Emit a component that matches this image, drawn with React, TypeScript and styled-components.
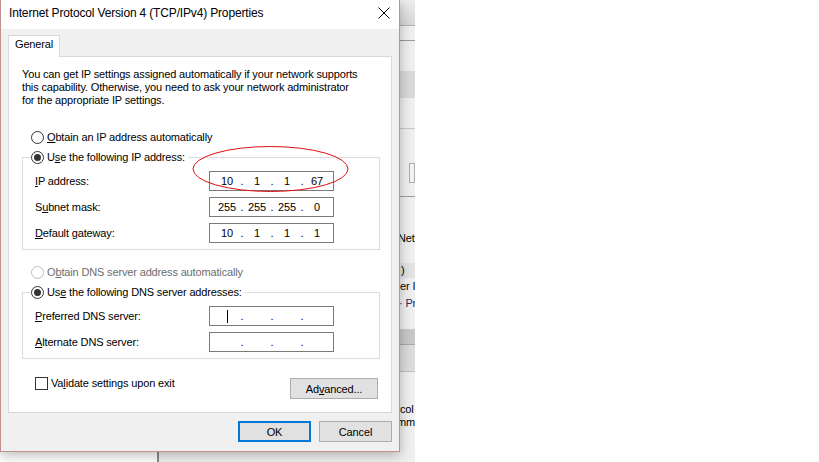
import React from "react";
import styled, { createGlobalStyle } from "styled-components";

// 기본 스타일
const GlobalStyle = createGlobalStyle`
  html, body {
    margin: 0;
    padding: 0;
    background: #ffffff;
  }
  body {
    font-family: "Liberation Sans", Arial, sans-serif;
    font-size: 11px;
    letter-spacing: -0.15px;
    color: #000;
  }
  * {
    box-sizing: border-box;
  }
`;

// 바탕 화면
const Desktop = styled.div`
  position: relative;
  width: 819px;
  height: 462px;
  overflow: hidden;
  background: #ffffff;
`;

// 뒤쪽 창 (다이얼로그 뒤에 깔림)
const BackWindow = styled.div`
  position: absolute;
  left: 157px;
  top: 0;
  width: 258px;
  height: 462px;
  background: #f0f0f0;
  border-left: 2px solid #8a8a8a;
  display: flex;
  flex-direction: column;
  overflow: hidden;
  white-space: nowrap;
`;

const Band = styled.div<{ $h: number; $bg?: string; $line?: string }>`
  flex: none;
  height: ${(p) => p.$h}px;
  background: ${(p) => p.$bg || "#f0f0f0"};
  border-bottom: ${(p) => (p.$line ? `1px solid ${p.$line}` : "none")};
`;

const BackField = styled.div`
  flex: none;
  height: 20px;
  margin-left: 250px;
  border: 1px solid #adadad;
  background: #f4f4f4;
`;

const BackText = styled.div<{ $x: number; $mt: number; $bg?: string; $color?: string }>`
  flex: none;
  height: 15px;
  line-height: 15px;
  margin-top: ${(p) => p.$mt}px;
  padding-left: ${(p) => p.$x - 159}px;
  background: ${(p) => p.$bg || "transparent"};
  color: ${(p) => p.$color || "#000"};
`;

// 다이얼로그 창
const Dialog = styled.div`
  position: absolute;
  left: 0;
  top: 0;
  width: 400px;
  height: 452px;
  background: #f0f0f0;
  border: 1px solid #c28f8f;
  border-top: none;
  box-shadow: 0 3px 12px rgba(0, 0, 0, 0.28);
  display: flex;
  flex-direction: column;
`;

const TitleBar = styled.div`
  flex: none;
  height: 29px;
  background: #ffffff;
  display: flex;
  justify-content: space-between;
  align-items: flex-start;
  padding: 5px 9px 0 8px;
`;

const TitleText = styled.div`
  font-size: 12px;
  letter-spacing: -0.16px;
  line-height: 16px;
`;

const CloseButton = styled.div`
  width: 12px;
  height: 12px;
  margin-top: 2px;
  display: flex;
`;

const DialogBody = styled.div`
  flex: 1;
  display: flex;
  flex-direction: column;
  padding: 6px 7px 0 7px;
`;

const Tab = styled.div`
  align-self: flex-start;
  width: 52px;
  height: 22px;
  padding: 0 0 0 6px;
  line-height: 17px;
  background: #ffffff;
  border: 1px solid #d9d9d9;
  border-bottom: none;
  position: relative;
  z-index: 1;
  margin-bottom: -1px;
`;

const TabPanel = styled.div`
  width: 384px;
  background: #ffffff;
  border: 1px solid #d9d9d9;
  padding: 11px 11px 13px 13px;
  display: flex;
  flex-direction: column;
`;

const Description = styled.p`
  margin: 0;
  line-height: 13px;
  white-space: nowrap;
`;

const OptionRow = styled.div<{ $disabled?: boolean; $mt?: number }>`
  display: flex;
  align-items: center;
  gap: 3px;
  height: 16px;
  margin-top: ${(p) => p.$mt ?? 0}px;
  padding-left: 9px;
  color: ${(p) => (p.$disabled ? "#6d6d6d" : "#000")};
`;

const RadioCircle = styled.span<{ $checked?: boolean; $disabled?: boolean }>`
  flex: none;
  width: 13px;
  height: 13px;
  border-radius: 50%;
  border: 1px solid ${(p) => (p.$disabled ? "#bcbcbc" : "#333")};
  background: #ffffff;
  display: inline-flex;
  align-items: center;
  justify-content: center;

  &::after {
    content: "";
    width: 7px;
    height: 7px;
    border-radius: 50%;
    background: #333;
    display: ${(p) => (p.$checked ? "block" : "none")};
  }
`;

const GroupBox = styled.fieldset`
  margin: 4px 0 0 0;
  padding: 6px 12px 6px 12px;
  border: 1px solid #dcdcdc;
  min-width: 0;
`;

const GroupLegend = styled.legend`
  padding: 0 3px 0 0;
  margin-left: -4px;
  height: 16px;
  line-height: 16px;
  display: flex;
  align-items: center;
  gap: 3px;
`;

const FieldGrid = styled.div`
  display: grid;
  grid-template-columns: 174px 125px;
  row-gap: 6px;
  align-items: center;
`;

const IpBox = styled.div`
  width: 125px;
  height: 20px;
  border: 1px solid #7a7a7a;
  background: #ffffff;
  padding-left: 6px;
  display: flex;
  align-items: center;
`;

const Octet = styled.span`
  width: 22px;
  text-align: center;
  display: flex;
  justify-content: center;
`;

const Dot = styled.span`
  width: 8px;
  text-align: center;
`;

const Caret = styled.span`
  width: 1px;
  height: 13px;
  background: #000;
`;

const BottomRow = styled.div`
  display: flex;
  justify-content: space-between;
  align-items: flex-start;
  margin-top: 18px;
  padding-left: 13px;
  padding-right: 2px;
`;

const CheckRow = styled.label`
  display: flex;
  align-items: flex-start;
  gap: 3px;
  line-height: 13px;
`;

const CheckBox = styled.span`
  flex: none;
  width: 13px;
  height: 13px;
  border: 1px solid #333;
  background: #fff;
`;

const Button = styled.div<{ $w: number; $default?: boolean; $mt?: number }>`
  width: ${(p) => p.$w}px;
  height: 21px;
  margin-top: ${(p) => p.$mt ?? 0}px;
  background: #e1e1e1;
  border: ${(p) => (p.$default ? "2px solid #0078d7" : "1px solid #adadad")};
  display: flex;
  align-items: center;
  justify-content: center;
`;

const ButtonRow = styled.div`
  display: flex;
  justify-content: flex-end;
  gap: 8px;
  margin-top: 8px;
`;

const Annotation = styled.svg`
  position: absolute;
  left: 192px;
  top: 146px;
  overflow: visible;
`;

type Field = { label: React.ReactNode; octets: string[]; caret?: boolean };

const ipFields: Field[] = [
  { label: <><u>I</u>P address:</>, octets: ["10", "1", "1", "67"] },
  { label: <>S<u>u</u>bnet mask:</>, octets: ["255", "255", "255", "0"] },
  { label: <><u>D</u>efault gateway:</>, octets: ["10", "1", "1", "1"] },
];

const dnsFields: Field[] = [
  { label: <><u>P</u>referred DNS server:</>, octets: ["", "", "", ""], caret: true },
  { label: <><u>A</u>lternate DNS server:</>, octets: ["", "", "", ""] },
];

const IpInput: React.FC<{ octets: string[]; caret?: boolean }> = ({ octets, caret }) => (
  <IpBox>
    {octets.map((o, i) => (
      <React.Fragment key={i}>
        {i > 0 && <Dot>.</Dot>}
        <Octet>{caret && i === 0 ? <Caret /> : o}</Octet>
      </React.Fragment>
    ))}
  </IpBox>
);

const Fields: React.FC<{ fields: Field[] }> = ({ fields }) => (
  <FieldGrid>
    {fields.map((f, i) => (
      <React.Fragment key={i}>
        <span>{f.label}</span>
        <IpInput octets={f.octets} caret={f.caret} />
      </React.Fragment>
    ))}
  </FieldGrid>
);

const App: React.FC = () => {
  return (
    <>
      <GlobalStyle />
      <Desktop>
        <BackWindow>
          <Band $h={26} $bg="linear-gradient(#ededed, #d8d8d8)" $line="#b0b0b0" />
          <Band $h={15} $line="#9a9a9a" />
          <Band $h={30} />
          <Band $h={27} $bg="#dadada" />
          <Band $h={31} $line="#c8c8c8" />
          <Band $h={34} />
          <BackField />
          <Band $h={14} $line="#a0a0a0" />
          <BackText $x={398} $mt={34}>Net</BackText>
          <BackText $x={401} $mt={17} $bg="#e3e3e3">)</BackText>
          <BackText $x={400} $mt={1}>er I</BackText>
          <BackText $x={399} $mt={2} $color="#1b2a6b">· Pr</BackText>
          <Band $h={18} />
          <Band $h={16} $bg="#c9c9c9" $line="#a8a8a8" />
          <Band $h={27} $bg="#dcdcdc" $line="#c0c0c0" />
          <BackText $x={400} $mt={30}>col</BackText>
          <BackText $x={397} $mt={-2}>mm</BackText>
        </BackWindow>

        <Dialog>
          <TitleBar>
            <TitleText>Internet Protocol Version 4 (TCP/IPv4) Properties</TitleText>
            <CloseButton>
              <svg width="12" height="12" viewBox="0 0 12 12">
                <path d="M0.5 0.5 L11.5 11.5 M11.5 0.5 L0.5 11.5" stroke="#000" strokeWidth="1" fill="none" />
              </svg>
            </CloseButton>
          </TitleBar>

          <DialogBody>
            <Tab>General</Tab>
            <TabPanel>
              <Description>
                You can get IP settings assigned automatically if your network supports
                <br />
                this capability. Otherwise, you need to ask your network administrator
                <br />
                for the appropriate IP settings.
              </Description>

              <OptionRow $mt={22}>
                <RadioCircle />
                <span>
                  <u>O</u>btain an IP address automatically
                </span>
              </OptionRow>

              <GroupBox>
                <GroupLegend>
                  <RadioCircle $checked />
                  <span>
                    U<u>s</u>e the following IP address:
                  </span>
                </GroupLegend>
                <Fields fields={ipFields} />
              </GroupBox>

              <OptionRow $mt={14} $disabled>
                <RadioCircle $disabled />
                <span>
                  O<u>b</u>tain DNS server address automatically
                </span>
              </OptionRow>

              <GroupBox>
                <GroupLegend>
                  <RadioCircle $checked />
                  <span>
                    Us<u>e</u> the following DNS server addresses:
                  </span>
                </GroupLegend>
                <Fields fields={dnsFields} />
              </GroupBox>

              <BottomRow>
                <CheckRow>
                  <CheckBox />
                  <span>
                    Va<u>l</u>idate settings upon exit
                  </span>
                </CheckRow>
                <Button $w={88} $mt={1}>
                  <span>
                    Ad<u>v</u>anced...
                  </span>
                </Button>
              </BottomRow>
            </TabPanel>

            <ButtonRow>
              <Button $w={73} $default>
                OK
              </Button>
              <Button $w={73}>Cancel</Button>
            </ButtonRow>
          </DialogBody>
        </Dialog>

        <Annotation width="158" height="47" viewBox="0 0 158 47">
          <ellipse cx="78.5" cy="23" rx="77.5" ry="22.5" fill="none" stroke="#e01010" strokeWidth="1" />
        </Annotation>
      </Desktop>
    </>
  );
};

export default App;
